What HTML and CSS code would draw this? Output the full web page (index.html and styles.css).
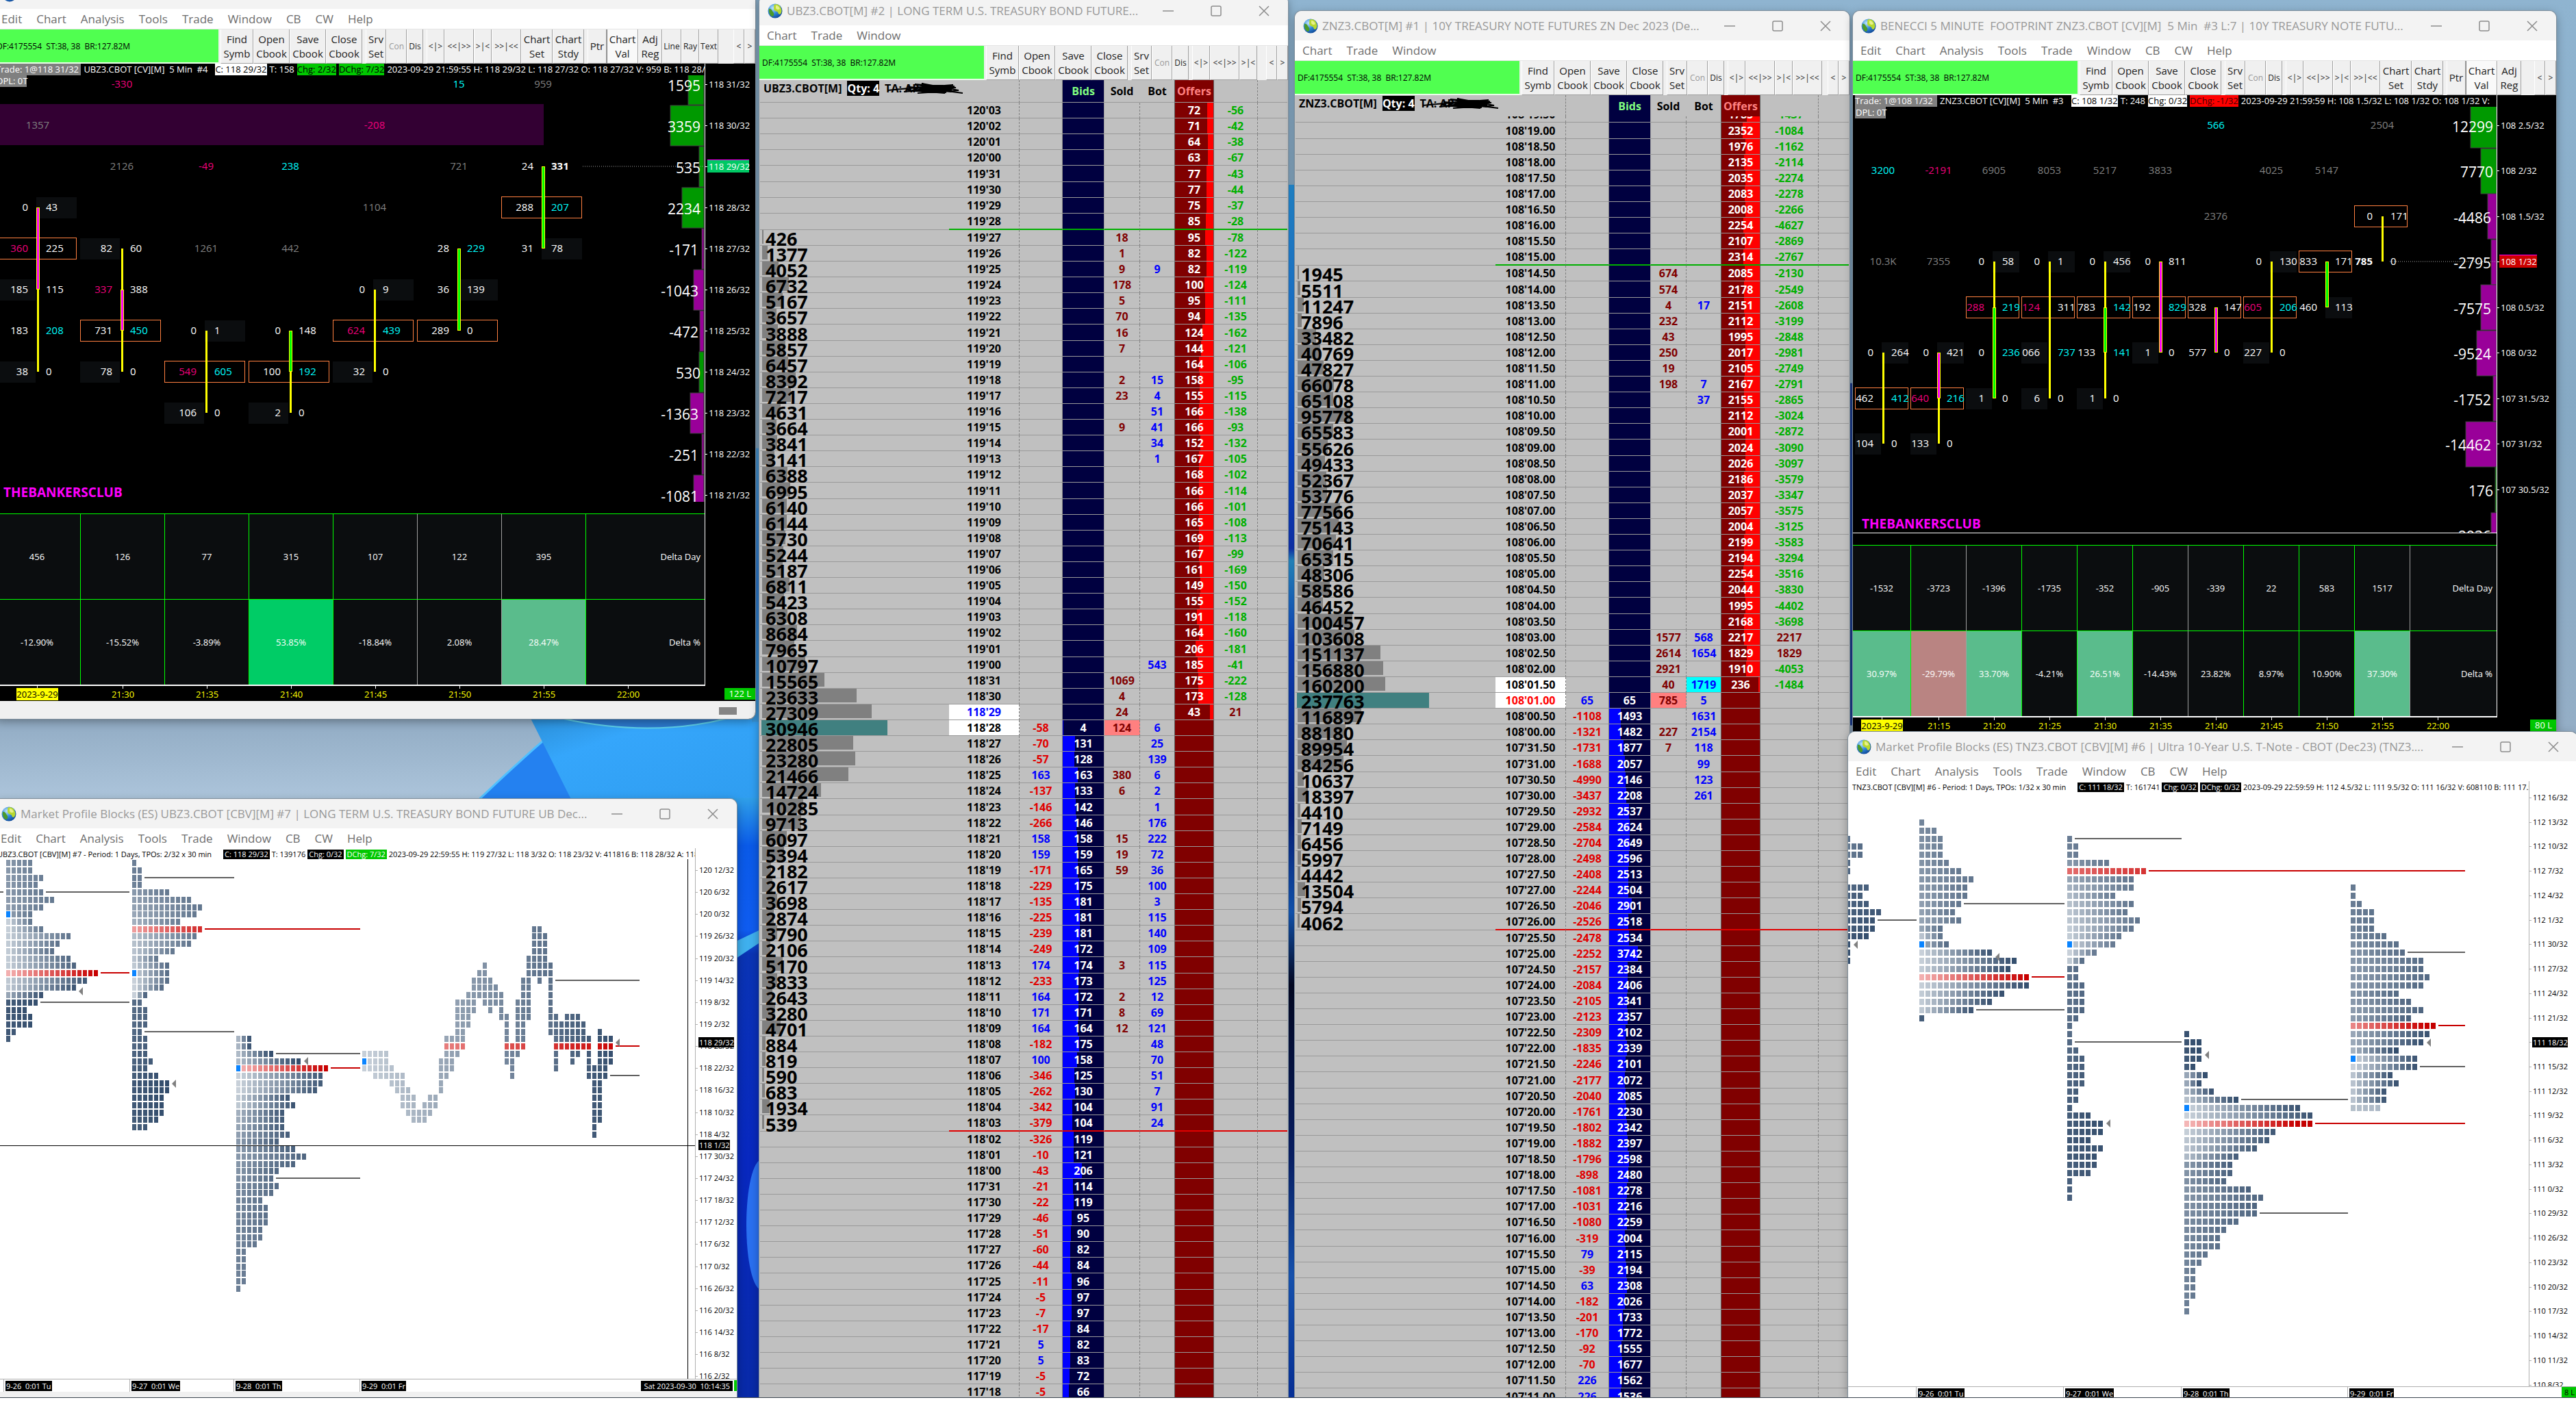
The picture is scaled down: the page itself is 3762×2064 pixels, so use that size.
FILE: index.html
```html
<!DOCTYPE html>
<html lang="en">
<head>
<meta charset="utf-8">
<title>Treasury futures workspace</title>
<link rel="stylesheet" href="styles.css">
</head>
<body>
<main class="desktop">
  <svg class="wallpaper" viewBox="0 0 3762 2042" preserveAspectRatio="none" aria-hidden="true">
    <defs>
      <linearGradient id="sky" x1="0" y1="0" x2="0" y2="1">
        <stop offset="0" stop-color="#8fb4d0"/><stop offset=".3" stop-color="#86a9c4"/>
        <stop offset=".52" stop-color="#94aec6"/><stop offset=".58" stop-color="#b0c8de"/><stop offset="1" stop-color="#a9c4dc"/>
      </linearGradient>
      <linearGradient id="petal" x1="0" y1="0" x2="1" y2="1">
        <stop offset="0" stop-color="#2b8fd8"/><stop offset=".3" stop-color="#35a6fb"/><stop offset="1" stop-color="#2f9df0"/>
      </linearGradient>
      <linearGradient id="deep" x1="0" y1="0" x2="0" y2="1">
        <stop offset="0" stop-color="#2f9fe8"/><stop offset=".08" stop-color="#0a5ae8"/><stop offset=".22" stop-color="#0f5cf0"/>
        <stop offset=".26" stop-color="#0a34b4"/><stop offset=".6" stop-color="#0828c0"/><stop offset="1" stop-color="#082aa8"/>
      </linearGradient>
      <linearGradient id="mid" x1="0" y1="0" x2="0" y2="1">
        <stop offset="0" stop-color="#2596e4"/><stop offset=".12" stop-color="#1f7fe6"/><stop offset=".22" stop-color="#0a4fe0"/>
        <stop offset=".3" stop-color="#1238c0"/><stop offset=".31" stop-color="#2a98d8"/><stop offset=".38" stop-color="#1048d0"/>
        <stop offset=".52" stop-color="#082488"/><stop offset=".6" stop-color="#1560c8"/><stop offset=".66" stop-color="#050a28"/>
        <stop offset=".8" stop-color="#0a2474"/><stop offset=".9" stop-color="#1a60cc"/><stop offset="1" stop-color="#0838b0"/>
      </linearGradient>
      <linearGradient id="edge" x1="0" y1="0" x2="0" y2="1">
        <stop offset="0" stop-color="#4a9cdc"/><stop offset=".5" stop-color="#2f7fd8"/><stop offset="1" stop-color="#3a9ae0"/>
      </linearGradient>
    </defs>
    <rect width="3762" height="2042" fill="url(#sky)"/>
    <path d="M794 1082 Q750 1120 700 1168 H860 Z" fill="#2481f0"/>
    <path d="M794 1082 Q750 1120 700 1168" fill="none" stroke="#4fc0ff" stroke-width="3"/>
    <path d="M775 1050 L834 1168 H1109 V1050 Z" fill="url(#petal)"/>
    <path d="M821 1050 Q949 1078 1062 1050 Z" fill="#2b78cc"/>
    <path d="M821 1050 Q949 1078 1062 1050" fill="none" stroke="#5fd0e8" stroke-width="2"/>
    <rect x="1098" y="655" width="14" height="400" fill="url(#edge)"/>
    <rect x="1070" y="1166" width="42" height="876" fill="url(#deep)"/>
    <path d="M1070 1378 L1112 1358 V1376 L1070 1404 Z" fill="#3fb0ee"/>
    <ellipse cx="1112" cy="1790" rx="22" ry="95" fill="#2a70f0"/>
    <rect x="1876" y="270" width="18" height="1772" fill="url(#mid)"/>
    <rect x="2700" y="560" width="8" height="500" fill="#1c3f96"/>
  </svg>

  <section class="window w-footprint-ub" aria-label="UBZ3 footprint">
    <header class="titlebar"><span class="app-icon"></span><h2></h2><div class="controls"></div></header>
    <nav class="menu" data-items="Edit,Chart,Analysis,Tools,Trade,Window,CB,CW,Help"></nav>
    <div class="toolbar" data-set="full"></div>
    <div class="footprint">
      <div class="fp-body">
        <div class="fp-plot">
          <div class="info dark">
            <span class="tag gray">Trade: 1@118 31/32 </span><span>UBZ3.CBOT [CV][M]  5 Min  #4</span><span class="tag white">C: 118 29/32</span><span>T: 158</span><span class="tag green">Chg: 2/32</span><span class="tag green">DChg: 7/32</span><span>2023-09-29 21:59:55 H: 118 29/32 L: 118 27/32 O: 118 27/32 V: 959 B: 118 28/32</span>
          </div>
          <svg class="plot" id="fp-ub"></svg>
          <table class="delta wide" id="delta-ub"></table>
        </div>
        <svg class="axis" id="fp-ub-axis"></svg>
      </div>
      <div class="times wide" id="times-ub"></div>
      <div class="hscroll"><span class="thumb"></span></div>
    </div>
  </section>

  <section class="window w-dom-ub" aria-label="UBZ3 ladder">
    <header class="titlebar"><span class="app-icon"></span><h2>UBZ3.CBOT[M] #2 | LONG TERM U.S. TREASURY BOND FUTURE...</h2><div class="controls"></div></header>
    <nav class="menu" data-items="Chart,Trade,Window"></nav>
    <div class="toolbar" data-set="short"></div>
    <div class="ladder-box"><table class="ladder ub" id="ladder-ub"></table></div>
  </section>

  <section class="window w-dom-zn" aria-label="ZNZ3 ladder">
    <header class="titlebar"><span class="app-icon"></span><h2>ZNZ3.CBOT[M] #1 | 10Y TREASURY NOTE FUTURES ZN Dec 2023 (De...</h2><div class="controls"></div></header>
    <nav class="menu" data-items="Chart,Trade,Window"></nav>
    <div class="toolbar" data-set="medium"></div>
    <div class="ladder-box"><table class="ladder zn" id="ladder-zn"></table></div>
  </section>

  <section class="window w-footprint-zn" aria-label="ZNZ3 footprint">
    <header class="titlebar"><span class="app-icon"></span><h2>BENECCI 5 MINUTE  FOOTPRINT ZNZ3.CBOT [CV][M]  5 Min  #3 L:7 | 10Y TREASURY NOTE FUTU...</h2><div class="controls"></div></header>
    <nav class="menu" data-items="Edit,Chart,Analysis,Tools,Trade,Window,CB,CW,Help"></nav>
    <div class="toolbar" data-set="study"></div>
    <div class="footprint">
      <div class="fp-body">
        <div class="fp-plot">
          <div class="info dark">
            <span class="tag gray">Trade: 1@108 1/32 </span><span>ZNZ3.CBOT [CV][M]  5 Min  #3</span><span class="tag white">C: 108 1/32</span><span>T: 248</span><span class="tag white">Chg: 0/32</span><span class="tag red">DChg: -1/32</span><span>2023-09-29 21:59:59 H: 108 1.5/32 L: 108 1/32 O: 108 1/32 V:</span>
          </div>
          <svg class="plot" id="fp-zn"></svg>
          <table class="delta narrow" id="delta-zn"></table>
        </div>
        <svg class="axis" id="fp-zn-axis"></svg>
      </div>
      <div class="times narrow" id="times-zn"></div>
    </div>
  </section>

  <section class="window w-profile-ub" aria-label="UBZ3 market profile">
    <header class="titlebar"><span class="app-icon"></span><h2>Market Profile Blocks (ES) UBZ3.CBOT [CBV][M] #7 | LONG TERM U.S. TREASURY BOND FUTURE UB Dec...</h2><div class="controls"></div></header>
    <nav class="menu" data-items="Edit,Chart,Analysis,Tools,Trade,Window,CB,CW,Help"></nav>
    <div class="profile">
      <div class="fp-body">
        <div class="fp-plot">
          <div class="info light"><span>UBZ3.CBOT [CBV][M] #7 - Period: 1 Days, TPOs: 2/32 x 30 min</span><span class="tag black">C: 118 29/32</span><span>T: 139176</span><span class="tag black">Chg: 0/32</span><span class="tag leaf">DChg: 7/32</span><span>2023-09-29 22:59:55 H: 119 27/32 L: 118 3/32 O: 118 23/32 V: 411816 B: 118 28/32 A: 118</span></div>
          <svg class="plot" id="mp-ub"></svg>
        </div>
        <svg class="axis" id="mp-ub-axis"></svg>
      </div>
      <div class="days ub"><i></i><span><b>9-26  0:01 Tu</b></span><span><b>9-27  0:01 We</b></span><span><b>9-28  0:01 Th</b></span><span><b>9-29  0:01 Fr</b></span><b class="clock">Sat 2023-09-30  10:14:35</b><i class="live"></i></div>
    </div>
  </section>

  <section class="window w-profile-tn" aria-label="TNZ3 market profile">
    <header class="titlebar"><span class="app-icon"></span><h2>Market Profile Blocks (ES) TNZ3.CBOT [CBV][M] #6 | Ultra 10-Year U.S. T-Note - CBOT (Dec23) (TNZ3....</h2><div class="controls"></div></header>
    <nav class="menu" data-items="Edit,Chart,Analysis,Tools,Trade,Window,CB,CW,Help"></nav>
    <div class="profile">
      <div class="fp-body">
        <div class="fp-plot">
          <div class="info light"><span>TNZ3.CBOT [CBV][M] #6 - Period: 1 Days, TPOs: 1/32 x 30 min</span><span class="tag black">C: 111 18/32</span><span>T: 161741</span><span class="tag black">Chg: 0/32</span><span class="tag black">DChg: 0/32</span><span>2023-09-29 22:59:59 H: 112 4.5/32 L: 111 9.5/32 O: 111 16/32 V: 608110 B: 111 17.5/32</span></div>
          <svg class="plot" id="mp-tn"></svg>
        </div>
        <svg class="axis" id="mp-tn-axis"></svg>
      </div>
      <div class="days tn"><i></i><span><b>9-26  0:01 Tu</b></span><span><b>9-27  0:01 We</b></span><span><b>9-28  0:01 Th</b></span><span><b>9-29  0:01 Fr</b></span><b class="count">8 L</b></div>
    </div>
  </section>
</main>
<footer class="tray"></footer>
<script src="app.js"></script>
</body>
</html>
```

FILE: styles.css
```css
* { box-sizing: border-box; }

body {
  margin: 0;
  min-height: 100vh;
  display: flex;
  flex-direction: column;
  background: #fff;
  font-family: "Open Sans", "Noto Sans", sans-serif;
}

button {
  font: inherit;
  color: inherit;
  background: none;
  border: 0;
  padding: 0;
}

.desktop {
  flex: 1;
  position: relative;
  overflow: hidden;
  border-bottom: 1px solid #3c4650;
}

.tray { height: 22px; background: #fff; }

.wallpaper { position: absolute; inset: 0; width: 100%; height: 100%; }

/* Windows on the desktop */
.window {
  position: absolute;
  display: flex;
  flex-direction: column;
  overflow: hidden;
  border-radius: 10px 10px 0 0;
  background: #f3f3f3;
  box-shadow: 0 0 0 1px #7f8f9c, 0 4px 14px rgba(0, 0, 0, .35);
}
.w-footprint-ub { left: -9px; top: -30px; width: 1112px; height: 1080px; border-radius: 10px; }
.w-dom-ub { left: 1109px; top: -6px; width: 772px; bottom: 0; }
.w-dom-zn { left: 1891px; top: 16px; width: 810px; bottom: 0; }
.w-footprint-zn { left: 2706px; top: 16px; width: 1027px; height: 1054px; }
.w-profile-ub { left: -10px; top: 1167px; width: 1086px; bottom: 0; }
.w-profile-tn { left: 2699px; top: 1069px; width: 1065px; bottom: 0; }

.titlebar {
  flex: none;
  height: 43px;
  display: flex;
  align-items: center;
  padding-left: 12px;
  background: #f3f3f3;
}
.titlebar h2 {
  flex: 1;
  margin: 0;
  min-width: 0;
  overflow: hidden;
  white-space: pre;
  font-size: 17px;
  font-weight: 400;
  line-height: 24px;
  color: #999;
}
.app-icon { flex: none; width: 22px; height: 22px; margin-right: 6px; }
.app-icon svg { display: block; width: 22px; height: 22px; }
.controls { flex: none; display: flex; }
.controls button { width: 70px; height: 42px; display: grid; place-items: center; }
.controls svg { width: 16px; height: 16px; fill: none; stroke: #8c8c8c; stroke-width: 1.5; }

.menu {
  flex: none;
  height: 29px;
  display: flex;
  align-items: center;
  gap: 21px;
  padding-left: 11px;
  background: #fff;
  font-size: 17px;
  line-height: 24px;
  color: #6e6e6e;
}

.toolbar {
  flex: none;
  height: 51px;
  display: flex;
  align-items: stretch;
  background: #f0f0f0;
  border-top: 1px solid #e4e4e4;
  font-size: 15px;
  line-height: 21px;
  color: #222;
}
.toolbar .feed {
  flex: 0 1 328px;
  margin-right: 3px;
  padding-left: 4px;
  display: flex;
  align-items: center;
  background: #50ff50;
  border-bottom: 2px solid #e8ffe8;
  font-size: 12px;
  white-space: pre;
  color: #000;
}
.toolbar button {
  flex: none;
  text-align: center;
  border-left: 1px solid #fff;
  border-right: 1px solid #a0a0a0;
  border-bottom: 1px solid #a0a0a0;
}
.toolbar .small { font-size: 12px; }
.toolbar .off { color: #999; }
.toolbar .on { background: #f9f9f9; border-left-color: #808080; }
.toolbar .space { flex: 0 0 5px; }
.toolbar .fill { flex: 1; }
.b16 { width: 16px; } .b24 { width: 24px; } .b26 { width: 26px; } .b28 { width: 28px; }
.b30 { width: 30px; } .b35 { width: 35px; } .b43 { width: 43px; } .b46 { width: 46px; }
.b48 { width: 48px; } .b53 { width: 53px; }

/* Price ladder */
.ladder-box { flex: 1; overflow: hidden; background: #c0c0c0; padding: 0 1px; min-height: 0; }
.ladder {
  width: 100%;
  table-layout: fixed;
  border-collapse: separate;
  border-spacing: 0;
  font-size: 16px;
  font-weight: 700;
  line-height: 22px;
  text-align: center;
  color: #000;
}
.ladder th, .ladder td { padding: 0; height: 23px; white-space: nowrap; }
.ladder td { border-bottom: 1px solid #999; }
.ladder .tall td { height: 24px; }
.ladder th { height: 33px; border-bottom: 1px solid #999; }
.ladder.zn th { height: 31px; border-bottom: 0; }
.c-vol { width: 276px; }
.zn .c-vol { width: 292px; }
.c-price { width: 103px; }
.c-d { width: 63px; }
.c-bid { width: 61px; }
.c-sold { width: 52px; }
.c-bot { width: 51px; }
.c-off { width: 57px; }
.c-od { width: 64px; }
.zn .c-od { width: 85px; }
.ladder .vol {
  padding-left: 8px;
  text-align: left;
  font-size: 27px;
  font-weight: 700;
  background: linear-gradient(#808080, #808080) 3px 0 / var(--bar, 0) 20px no-repeat;
}
.ladder .vol.poc { background: linear-gradient(#408080, #408080) 2px 0 / var(--bar) 100% no-repeat; }
.ladder .vol span { display: block; height: 22px; line-height: 26px; }
.ladder .price, .ladder .sold, .ladder .od { border-right: 1px dashed #808080; }
.ladder .bd { color: #e00000; border-right: 1px solid #808080; }
.ladder .up { color: #0000ff; }
.ladder .bid {
  color: #fff;
  border-right: 1px solid #a0a0a0;
  background: linear-gradient(#0000ff, #0000ff) 0 0 / var(--bar, 0) 100% no-repeat, #000040;
}
.ladder .sold { color: #800000; }
.ladder .bot { color: #0000ff; border-right: 1px solid #606060; }
.ladder .off {
  color: #fff;
  border-right: 1px solid #606060;
  background: linear-gradient(#ff0000, #ff0000) 100% 0 / var(--bar, 0) 100% no-repeat, #800000;
}
.ladder .od { color: #00b000; }
.ladder .od.plus { color: #800000; }
.ladder .price.last { background: #fff; }
.ladder .price.blue { color: #0000ff; }
.ladder .price.red { color: #ff0000; }
.ladder .sold.hit { background: #ff8080; }
.ladder .bot.hit { background: #00ffff; }
.ladder .high td:not(.vol) { border-bottom: 2px solid #00b000; }
.ladder .low td:not(.vol) { border-bottom: 2px solid #e00000; }
.ladder th.bid { color: #80ff80; }
.ladder th.sold, .ladder th.bot { color: #000; }
.ladder th.sold { border-right-color: #c0c0c0; }
.ladder th.off { color: #ff8080; }
.ladder .cut td { height: 9px; }
.ladder .cut span { display: flex; align-items: flex-end; justify-content: center; height: 8px; overflow: hidden; }
.account { display: flex; align-items: center; height: 30px; padding: 0 0 8px 5px; gap: 8px; }
.account .qty { background: #000; color: #fff; }
.account .owner { position: relative; }
.account svg { position: absolute; left: 4px; top: 2px; width: 112px; height: 18px; fill: none; stroke: #000; stroke-width: 2; }

/* Chart windows */
.footprint, .profile { flex: 1; min-height: 0; display: flex; flex-direction: column; }
.footprint { background: #000; }
.profile { background: #fff; }
.fp-body { flex: 1; min-height: 0; display: flex; }
.fp-plot { flex: 1; min-width: 0; display: flex; flex-direction: column; }
.footprint .fp-plot { border-right: 1px solid #fff; border-bottom: 2px solid #fff; }
.plot { flex: 1; min-height: 0; width: 100%; display: block; overflow: hidden; }
.axis { flex: none; overflow: hidden; height: 100%; }
.w-footprint-ub .axis { width: 73px; }
.w-footprint-zn .axis { width: 86px; }
.w-profile-ub .axis { width: 61px; border-left: 1px solid #b0b0b0; }
.w-profile-tn .axis { width: 71px; border-left: 1px solid #b0b0b0; }

.info { flex: none; display: flex; gap: 4px; overflow: hidden; white-space: pre; }
.info span { flex: none; }
.info.dark { height: 17px; padding-left: 3px; font-size: 13px; line-height: 17px; color: #fff; }
.info.dark .tag.gray { min-width: 120px; }
.info.dark span:nth-child(2) { min-width: 188px; }
.info.light { height: 16px; padding-top: 2px; gap: 3px; font-size: 11px; line-height: 14px; color: #000; }
.info.light .tag { padding: 0 2px; }
.info.light span:first-child { margin-right: 14px; }
.w-profile-ub .info span:first-child { margin-left: 6px; }
.w-profile-tn .info { padding-left: 6px; }
.tag.gray { background: #808080; }
.tag.white { background: #fff; color: #000; }
.tag.green { background: #00c800; color: #000; }
.tag.red { background: #ff0000; color: #400000; }
.tag.black { background: #000; color: #fff; }
.tag.leaf { background: #00c800; color: #fff; }

.delta {
  flex: none;
  width: 100%;
  margin-top: 17px;
  table-layout: fixed;
  border-collapse: separate;
  border-spacing: 0;
  font-size: 13px;
  line-height: 18px;
  color: #fff;
  text-align: center;
}
.delta td, .delta th {
  height: 125px;
  padding: 0;
  font-weight: 400;
  background: #0b0d0f;
  border-top: 1px solid #00ff00;
  border-right: 1px solid #00ff00;
}
.delta th { text-align: right; padding-right: 6px; border-right: 0; }
.delta .soft { border-right-color: #a0a0a0; }
.delta .buy { background: #5abc8c; }
.delta .strong { background: #00cc66; }
.delta .sell { background: #b98482; }
.delta.wide col { width: 123px; }
.delta.wide col:first-child { width: 127px; }
.delta.narrow col { width: 81px; }
.delta.narrow col:first-child { width: 85px; }
.delta col:last-child { width: auto; }

.times {
  flex: none;
  height: 22px;
  display: flex;
  align-items: center;
  font-size: 13px;
  line-height: 17px;
  color: #ffff00;
}
.times time { flex: none; text-align: center; background: linear-gradient(#fff, #fff) 50% 0 / 1px 4px no-repeat; padding: 4px 0 1px; }
.times.wide time { width: 123px; }
.times.wide time:first-child { width: 127px; }
.times.narrow time { width: 81px; }
.times.narrow time:first-child { width: 85px; }
.times mark { background: #ffff00; color: #000; }
.times output { margin-left: auto; padding: 0 6px 0 7px; background: #00c800; color: #fff; }
.hscroll { flex: none; height: 26px; padding: 8px 27px; background: #f0f0f0; border-top: 1px solid #fff; display: flex; justify-content: flex-end; }
.hscroll .thumb { width: 26px; height: 11px; background: #858585; }

.days { flex: none; display: flex; align-items: center; border-top: 1px solid #b0b0b0; font-size: 11px; line-height: 15px; white-space: pre; }
.days.ub { height: 27px; padding-bottom: 8px; background: linear-gradient(#fff 18px, #f0f0f0 18px); }
.days.tn { height: 16px; }
.days i { flex: none; }
.days span { flex: none; align-self: stretch; border-left: 1px solid #b0b0b0; padding: 2px 0 0 2px; }
.days b { font-weight: 400; background: #000; color: #fff; display: inline-block; padding: 0 1px; }
.days.ub i:first-child { width: 15px; }
.days.ub span { width: 184px; }
.days.ub span:nth-of-type(2) { width: 152px; }
.days.tn i:first-child { width: 99px; }
.days.tn span { width: 215px; }
.days.tn span:nth-of-type(2) { width: 172px; }
.days.tn span:nth-of-type(3) { width: 243px; }
.days .clock { margin-left: auto; padding: 0 4px; }
.days .live { width: 4px; height: 16px; margin-left: 2px; background: #00c800; }
.days .count { margin-left: auto; padding: 0 4px; background: #00c800; color: #000; }

/* Chart drawing */
.plot text, .axis text { font-family: "Open Sans", "Noto Sans", sans-serif; }
.fp-cell { font-size: 15px; fill: #fff; }
.fp-cell.gray { fill: #808080; }
.fp-cell.mag { fill: #f0007c; }
.fp-cell.cyan { fill: #00ffff; }
.fp-cell.bold { font-weight: 700; }
.fp-net { font-size: 21px; fill: #fff; text-anchor: end; }
.fp-club { font-size: 19px; font-weight: 700; fill: #ff00ff; }
.fp-price { font-size: 13px; fill: #fff; }
.fp-tag { font-size: 13px; fill: #fff; }
.mp-price { font-size: 11px; fill: #000; }
.mp-price.inv { fill: #fff; }
.mid { text-anchor: middle; }
.end { text-anchor: end; }
```

FILE: app.js
```js
const $ = (s) => document.getElementById(s);
const all = (s) => document.querySelectorAll(s);

/* Window chrome */
all('.app-icon').forEach((el, i) => {
  el.innerHTML = `<svg viewBox="0 0 22 22"><defs><radialGradient id="g${i}" cx=".35" cy=".3" r=".8"><stop offset="0" stop-color="#bfe6ff"/><stop offset=".5" stop-color="#2f86d8"/><stop offset="1" stop-color="#0b3f8c"/></radialGradient></defs><circle cx="11" cy="11" r="10.5" fill="url(#g${i})"/><path d="M9 2c4-2 9 0 10 4 2 3 2 8-1 10-3 0-2-3-4-4-3-1-5-2-5-5 0-2 1-2 0-5z" fill="#b8d92e"/><path d="M12 3c3 0 5 2 6 5-2 2-5 1-6-1z" fill="#e6f08a"/><path d="M2 8c2-1 4 1 5 3s3 3 2 6-3 2-4 1-4-5-3-10z" fill="#4c9a2a"/></svg>`;
});
all('.controls').forEach((el) => {
  el.innerHTML =
    '<button aria-label="Minimize"><svg viewBox="0 0 16 16"><path d="M0 8h16"/></svg></button>' +
    '<button aria-label="Maximize"><svg viewBox="0 0 16 16"><rect x="1" y="1" width="14" height="14" rx="2"/></svg></button>' +
    '<button aria-label="Close"><svg viewBox="0 0 16 16"><path d="M1 1l14 14M15 1L1 15"/></svg></button>';
});
all('.menu').forEach((el) => {
  el.innerHTML = el.dataset.items.split(',').map((t) => `<button>${t}</button>`).join('');
});

const base = [['Find<br>Symb', 48], ['Open<br>Cbook', 53], ['Save<br>Cbook', 53], ['Close<br>Cbook', 53], 'space',
  ['Srv<br>Set', 30], ['Con', 30, 'small off'], ['Dis', 24, 'small'], 'space',
  ['&lt;|&gt;', 26, 'small'], ['&lt;&lt;|&gt;&gt;', 43, 'small'], ['&gt;|&lt;', 26, 'small']];
const squeeze = [['&gt;&gt;|&lt;&lt;', 43, 'small']];
const study = [['Chart<br>Set', 46], ['Chart<br>Stdy', 46], 'space', ['Ptr', 28], ['Chart<br>Val', 46, 'on'], ['Adj<br>Reg', 35]];
const draw = [['Line', 28, 'small'], ['Ray', 26, 'small'], ['Text', 28, 'small']];
const arrows = ['fill', ['&lt;', 16, 'small'], ['&gt;', 16, 'small']];
const sets = {
  short: [...base, ...arrows],
  medium: [...base, ...squeeze, ...arrows],
  study: [...base, ...squeeze, ...study, ...arrows],
  full: [...base, ...squeeze, ...study, ...draw, ...arrows]
};
all('.toolbar').forEach((el) => {
  el.innerHTML = '<span class="feed">DF:4175554  ST:38, 38  BR:127.82M</span>' + sets[el.dataset.set].map((b) =>
    typeof b === 'string' ? `<span class="${b}"></span>` : `<button class="b${b[1]} ${b[2] || ''}">${b[0]}</button>`).join('');
});

/* Price ladders */
function ladder(id, o) {
  const top = Math.max(...o.vol);
  const rows = [];
  for (let i = 0; i < 82; i++) {
    const v = o.vol[i - o.volAt], b = o.bid[i - o.split], bd = o.bd[i - o.split];
    const f = o.off[i], od = o.od[i], s = o.sold[i], t = o.bot[i];
    const cut = o.cut && i === 0;
    const w = (x) => (x === undefined ? '' : cut ? `<span>${x}</span>` : x);
    const cls = [cut ? 'cut' : '', i % 10 === o.tall ? 'tall' : '', i === o.high ? 'high' : '', i === o.low ? 'low' : ''].join(' ').trim();
    rows.push(`<tr class="${cls}">` +
      (v ? `<td class="vol${v === top ? ' poc' : ''}" style="--bar:${Math.round(v / top * o.volPx) + (v === top ? 3 : 0)}px"><span>${v}</span></td>` : '<td class="vol"></td>') +
      `<td class="price ${o.mark[i] || ''}">${w(o.price(i))}</td>` +
      `<td class="bd${bd > 0 ? ' up' : ''}">${w(bd)}</td>` +
      `<td class="bid"${b ? ` style="--bar:${Math.round(b * 61 / o.full)}px"` : ''}>${w(b)}</td>` +
      `<td class="sold${i === o.soldHit ? ' hit' : ''}">${w(s)}</td>` +
      `<td class="bot${i === o.botHit ? ' hit' : ''}">${w(t)}</td>` +
      `<td class="off"${f ? ` style="--bar:${Math.round(f * 57 / o.full)}px"` : ''}>${w(f)}</td>` +
      `<td class="od${od > 0 ? ' plus' : ''}">${w(od)}</td><td></td></tr>`);
  }
  $(id).innerHTML = '<colgroup><col class="c-vol"><col class="c-price"><col class="c-d"><col class="c-bid"><col class="c-sold"><col class="c-bot"><col class="c-off"><col class="c-od"><col></colgroup>' +
    `<thead><tr><th colspan="2" class="price"><div class="account"><span>${o.symbol}</span><span class="qty">Qty: 4</span><span class="owner">${o.owner}<svg viewBox="0 0 112 18"><path d="M0 12L60 6 20 10 96 4 24 14 100 8 40 3 92 14 30 7 88 11 44 16 104 12 50 2 84 16 36 12 98 6 M56 9L110 16M60 5H82M50 11H94M46 8H90M52 13H88M58 6L86 15"/></svg></span></div></th>` +
    '<th class="bd"></th><th class="bid">Bids</th><th class="sold">Sold</th><th class="bot">Bot</th><th class="off">Offers</th><th class="od"></th><th></th></tr></thead>' +
    `<tbody>${rows.join('')}</tbody>`;
}
const pad = (n) => String(n).padStart(2, '0');

ladder('ladder-ub', {
  symbol: 'UBZ3.CBOT[M]', owner: 'TA: AP', tall: 4, high: 7, low: 64, split: 39, volAt: 8, volPx: 181, full: 450,
  price: (i) => { const t = 120 * 32 + 3 - i; return `${Math.floor(t / 32)}'${pad(t % 32)}`; },
  mark: { 38: 'last blue', 39: 'last' }, soldHit: 39,
  vol: [426,1377,4052,6732,5167,3657,3888,5857,6457,8392,7217,4631,3664,3841,3141,6388,6995,6140,6144,5730,5244,5187,6811,5423,6308,8684,7965,10797,15565,23633,27309,30946,22805,23280,21466,14724,10285,9713,6097,5394,2182,2617,3698,2874,3790,2106,5170,3833,2643,3280,4701,884,819,590,683,1934,539],
  off: [72,71,64,63,77,77,75,85,95,82,82,100,95,94,124,144,164,158,155,166,166,152,167,168,166,166,165,169,167,161,149,155,191,164,206,185,175,173,43],
  od: [-56,-42,-38,-67,-43,-44,-37,-28,-78,-122,-119,-124,-111,-135,-162,-121,-106,-95,-115,-138,-93,-132,-105,-102,-114,-101,-108,-113,-99,-169,-150,-152,-118,-160,-181,-41,-222,-128,21],
  bid: [4,131,128,163,133,142,146,158,159,165,175,181,181,181,172,174,173,172,171,164,175,158,125,130,104,104,119,121,206,114,119,95,90,82,84,96,97,97,84,82,83,72,66],
  bd: [-58,-70,-57,163,-137,-146,-266,158,159,-171,-229,-135,-225,-239,-249,174,-233,164,171,164,-182,100,-346,-262,-342,-379,-326,-10,-43,-21,-22,-46,-51,-60,-44,-11,-5,-7,-17,5,5,-5,-5],
  sold: {8:18,9:1,10:9,11:178,12:5,13:70,14:16,15:7,17:2,18:23,20:9,36:1069,37:4,38:24,39:124,42:380,43:6,46:15,47:19,48:59,54:3,56:2,57:8,58:12},
  bot: {10:9,17:15,18:4,19:51,20:41,21:34,22:1,35:543,39:6,40:25,41:139,42:6,43:2,44:1,45:176,46:222,47:72,48:36,49:100,50:3,51:115,52:140,53:109,54:115,55:125,56:12,57:69,58:121,59:48,60:70,61:51,62:7,63:91,64:24}
});

ladder('ladder-zn', {
  symbol: 'ZNZ3.CBOT[M]', owner: 'TA: AP', cut: true, tall: 1, high: 9, low: 51, split: 37, volAt: 10, volPx: 190, full: 5400,
  price: (i) => { const t = 108 * 32 + 19.5 - i / 2; const q = Math.floor(t / 32); const r = t - q * 32; return `${q}'${r.toFixed(2).padStart(5, '0')}`; },
  mark: { 36: 'last', 37: 'last red' }, soldHit: 37, botHit: 36,
  vol: [1945,5511,11247,7896,33482,40769,47827,66078,65108,95778,65583,55626,49433,52367,53776,77566,75143,70641,65315,48306,58586,46452,100457,103608,151137,156880,160200,237763,116897,88180,89954,84256,10637,18397,4410,7149,6456,5997,4442,13504,5794,4062],
  off: [1785,2352,1976,2135,2035,2083,2008,2254,2107,2314,2085,2178,2151,2112,1995,2017,2105,2167,2155,2112,2001,2024,2026,2186,2037,2057,2004,2199,2194,2254,2044,1995,2168,2217,1829,1910,236],
  od: [-1437,-1084,-1162,-2114,-2274,-2278,-2266,-4627,-2869,-2767,-2130,-2549,-2608,-3199,-2848,-2981,-2749,-2791,-2865,-3024,-2872,-3090,-3097,-3579,-3347,-3575,-3125,-3583,-3294,-3516,-3830,-4402,-3698,2217,1829,-4053,-1484],
  bid: [65,1493,1482,1877,2057,2146,2208,2537,2624,2649,2596,2513,2504,2901,2518,2534,3742,2384,2406,2341,2357,2102,2339,2101,2072,2085,2230,2342,2397,2598,2480,2278,2216,2259,2004,2115,2194,2308,2026,1733,1772,1555,1677,1562,1536],
  bd: [65,-1108,-1321,-1731,-1688,-4990,-3437,-2932,-2584,-2704,-2498,-2408,-2244,-2046,-2526,-2478,-2252,-2157,-2084,-2105,-2123,-2309,-1835,-2246,-2177,-2040,-1761,-1802,-1882,-1796,-898,-1081,-1031,-1080,-319,79,-39,63,-182,-201,-170,-92,-70,226,226],
  sold: {10:674,11:574,12:4,13:232,14:43,15:250,16:19,17:198,33:1577,34:2614,35:2921,36:40,37:785,39:227,40:7},
  bot: {12:17,17:7,18:37,33:568,34:1654,36:1719,37:5,38:1631,39:2154,40:118,41:99,42:123,43:261}
});

/* SVG helpers */
const rect = (x, y, w, h, fill, extra = '') => `<rect x="${x}" y="${y}" width="${w}" height="${h}" fill="${fill}" ${extra}/>`;
const text = (x, y, cls, s) => `<text x="${x}" y="${y}" dy=".36em" class="${cls}">${s}</text>`;
const paint = (id, x, y, body) => { $(id).innerHTML = `<g transform="translate(${-x} ${-y})">${body}</g>`; };

/* Footprint charts. Cell: [column, row, sell, buy, flags]
   o boxed, L/R dim side, m magenta sell, c cyan buy, b/B bold side */
function footprint(id, o) {
  const X = (c) => o.cx + c * o.dx, Y = (k) => Math.round(o.cy + k * o.dy);
  let s = '';
  if (o.zone) s += rect(...o.zone, '#330033');
  o.net.forEach((n, k) => {
    const y = Math.round(o.cy + (k - .5) * o.dy) + 1;
    s += rect(o.right - n[1], y, n[1], Math.round(o.dy) - 1, n[0] > 0 ? '#009900' : '#990099', 'stroke="#404040"');
  });
  s += `<path d="M${o.dots} ${Y(o.lastRow)}H${o.right}" stroke="#a0a0a0" stroke-dasharray="1 2"/>`;
  o.cells.forEach(([c, k, a, b, f = '']) => {
    const x = X(c), y = Y(k);
    if (f.includes('L')) s += rect(x - o.half, y - 15, o.half - 3, 31, '#0b0d0f');
    if (f.includes('R')) s += rect(x - 2, y - 15, o.half - 2, 31, '#0b0d0f');
    if (f.includes('o')) s += rect(x - o.half + .5, y - 15.5, o.half * 2 - 5, 31, 'none', 'stroke="#ff8040"');
  });
  o.bars.forEach(([c, a, b, kind]) => {
    const x = X(c);
    if (kind === 'y') s += rect(x - 1, Y(a), 3, Y(b) - Y(a), '#ffff00');
    else s += rect(x - 2, Y(a), 5, Y(b) - Y(a), '#ffff00') + rect(x - 1, Y(a) + 1, 3, Y(b) - Y(a) - 2, kind === 'g' ? '#00ff00' : '#ff00ff');
  });
  o.cells.forEach(([c, k, a, b, f = '']) => {
    s += text(X(c) - 14, Y(k), `fp-cell end${f.includes('m') ? ' mag' : ''}${f.includes('b') ? ' bold' : ''}`, a);
    s += text(X(c) + 12, Y(k), `fp-cell${f.includes('c') ? ' cyan' : ''}${f.includes('B') ? ' bold' : ''}`, b);
  });
  o.notes.forEach(([c, k, t, cls = 'gray']) => { s += text(X(c), Y(k), `fp-cell mid ${cls}`, t); });
  o.net.forEach((n, k) => { s += text(o.right - (n[0] > 0 ? 5 : 8), Y(k) + 2, 'fp-net', n[0]); });
  s += rect(o.x + 3, o.y, 45, 17, '#808080') + text(o.dpl, o.y + 8, 'fp-tag', 'DPL: 0T');
  s += text(o.club[0], o.club[1], 'fp-club', 'THEBANKERSCLUB');
  s += rect(o.x, o.bottom - 2, 2000, 2, '#ffffff');
  paint(id, o.x, o.y, s);

  let a = '';
  o.labels.forEach((t, k) => {
    if (k === o.lastRow) a += rect(o.ax + 3, Y(k) - 9, o.tagW, 18, o.tagFill) + rect(o.ax + 3, Y(k) - 10, o.tagW, 1, '#ff00ff');
    a += rect(o.ax, Y(k), 3, 1, '#ffffff') + text(o.ax + 5, Y(k), 'fp-price', t);
  });
  paint(id + '-axis', o.ax, o.y - 17, a);
}

footprint('fp-ub', {
  x: -9, y: 110, bottom: 735, cx: 55, dx: 123, cy: 122.5, dy: 60, half: 61, right: 1028, ax: 1030,
  zone: [-9, 152, 803, 60], dots: 851, lastRow: 2, dpl: -5, club: [5, 719], tagW: 61, tagFill: '#00c864',
  net: [[1595,23],[3359,49],[535,7],[2234,32],[-171,3],[-1043,15],[-472,6],[530,7],[-1363,20],[-251,3],[-1081,15]],
  labels: [31,30,29,28,27,26,25,24,23,22,21].map((n) => `118 ${n}/32`),
  cells: [
    [0,3,0,43,'R'],[0,4,360,225,'om'],[0,5,185,115,'L'],[0,6,183,208,'c'],[0,7,38,0,'L'],
    [1,4,82,60,'L'],[1,5,337,388,'m'],[1,6,731,450,'oc'],[1,7,78,0,'L'],
    [2,6,0,1,'R'],[2,7,549,605,'omc'],[2,8,106,0,'L'],
    [3,6,0,148],[3,7,100,192,'oc'],[3,8,2,0,'L'],
    [4,5,0,9,'R'],[4,6,624,439,'omc'],[4,7,32,0,'L'],
    [5,4,28,229,'c'],[5,5,36,139,'R'],[5,6,289,0,'o'],
    [6,2,24,331,'B'],[6,3,288,207,'oc'],[6,4,31,78,'R']
  ],
  bars: [[0,3,7,'y'],[0,3,5,'m'],[1,4,7,'y'],[1,5,6,'m'],[2,6,8,'y'],[3,6,8,'y'],[3,6,7,'g'],[4,5,7,'y'],[5,4,6,'g'],[6,2,4,'g']],
  notes: [[0,1,1357],[1,0,-330,'mag'],[1,2,2126],[2,2,-49,'mag'],[2,4,1261],[3,2,238,'cyan'],[3,4,442],[4,1,-208,'mag'],[4,3,1104],[5,0,15,'cyan'],[5,2,721],[6,0,959]]
});

footprint('fp-zn', {
  x: 2706, y: 156, bottom: 780, cx: 2750, dx: 81, cy: 182.5, dy: 66.5, half: 41, right: 3646, ax: 3647,
  dots: 3490, lastRow: 3, dpl: 2710, club: [2719, 765], tagW: 55, tagFill: '#cc0000',
  net: [[12299,38],[7770,23],[-4486,13],[-2795,8],[-7575,23],[-9524,29],[-1752,5],[-14462,45],[176,2],[-2936,8]],
  labels: ['108 2.5/32','108 2/32','108 1.5/32','108 1/32','108 0.5/32','108 0/32','107 31.5/32','107 31/32','107 30.5/32'],
  cells: [
    [0,5,0,264,'R'],[0,6,462,412,'oc'],[0,7,104,0,'L'],
    [1,5,0,421,'R'],[1,6,640,216,'omc'],[1,7,133,0,'L'],
    [2,3,0,58,'R'],[2,4,288,219,'omc'],[2,5,0,236,'c'],[2,6,1,0,'L'],
    [3,3,0,1,'R'],[3,4,124,311,'om'],[3,5,'066',737,'Lc'],[3,6,6,0,'L'],
    [4,3,0,456,'R'],[4,4,783,142,'oc'],[4,5,133,141,'c'],[4,6,1,0,'L'],
    [5,3,0,811],[5,4,192,829,'oc'],[5,5,1,0,'L'],
    [6,4,328,147,'o'],[6,5,577,0],
    [7,3,0,130,'R'],[7,4,605,206,'omc'],[7,5,227,0,'L'],
    [8,3,833,171,'o'],[8,4,460,113,'R'],
    [9,2,0,171,'o'],[9,3,785,0,'b']
  ],
  bars: [[0,5,7,'y'],[1,5,7,'y'],[1,5,6,'m'],[2,3,6,'y'],[2,4,6,'g'],[3,3,6,'y'],[4,3,6,'y'],[4,4,5,'g'],[5,3,5,'m'],[6,4,5,'m'],[7,3,5,'y'],[8,3,4,'g'],[9,2,3,'y']],
  notes: [[0,1,3200,'cyan'],[0,3,'10.3K'],[1,1,-2191,'mag'],[1,3,7355],[2,1,6905],[3,1,8053],[4,1,5217],[5,1,3833],[6,0,566,'cyan'],[6,2,2376],[7,1,4025],[8,1,5147],[9,0,2504]]
});

/* Delta tables and time scales */
function delta(id, day, pct, soft, fills) {
  const cell = (v, i, c = '') => `<td class="${soft.includes(i) ? 'soft ' : ''}${c}">${v}</td>`;
  $(id).innerHTML = `<colgroup>${'<col>'.repeat(day.length + 1)}</colgroup><tbody>` +
    `<tr>${day.map((v, i) => cell(v, i)).join('')}<th scope="row">Delta Day</th></tr>` +
    `<tr>${pct.map((v, i) => cell(v + '%', i, fills[i])).join('')}<th scope="row">Delta %</th></tr></tbody>`;
}
delta('delta-ub', [456,126,77,315,107,122,395], ['-12.90','-15.52','-3.89','53.85','-18.84','2.08','28.47'], [4, 5], { 3: 'strong', 6: 'buy' });
delta('delta-zn', [-1532,-3723,-1396,-1735,-352,-905,-339,22,583,1517],
  ['30.97','-29.79','33.70','-4.21','26.51','-14.43','23.82','8.97','10.90','37.30'], [1, 5, 9], { 0: 'buy', 1: 'sell', 2: 'buy', 4: 'buy', 9: 'buy' });
const times = (id, list, n) => {
  $(id).innerHTML = `<time><mark>2023-9-29</mark></time>${list.map((t) => `<time>${t}</time>`).join('')}<output>${n} L</output>`;
};
times('times-ub', ['21:30','21:35','21:40','21:45','21:50','21:55','22:00'], 122);
times('times-zn', ['21:15','21:20','21:25','21:30','21:35','21:40','21:45','21:50','21:55','22:00'], 80);

/* Market profiles. Row: [blocks, first tone, last tone]; tones run 0 (light) to 100 (dark) */
const mix = (a, b, t) => `rgb(${a.map((v, i) => Math.round(v + (b[i] - v) * t)).join()})`;
const slate = (t) => mix([206, 214, 222], [48, 74, 106], t / 100);
const rouge = (t) => mix([246, 190, 190], [200, 0, 0], t / 100);

function profile(id, o) {
  const Y = (r) => Math.round(o.cy + r * o.dy);
  const block = (x, r, fill) => rect(x, Y(r) - 4, o.bw, o.bh, fill);
  let s = '';
  o.days.forEach((d) => {
    let r = d.from;
    d.rows.forEach(([n, a, b]) => {
      for (let j = 0; j < n; j++) {
        const t = n > 1 ? a + (b - a) * j / (n - 1) : a;
        s += block(d.x + j * o.bx, r, d.open === r && j === 0 ? '#0a84ff' : d.poc === r ? rouge(t) : slate(t));
      }
      r++;
    });
  });
  (o.split || []).forEach(([a, b], j, list) => {
    for (let r = a; r <= b; r++) {
      const t = 5 + 92 * j / list.length;
      s += block(o.splitX + j * o.bx, r, j === 0 && r === 26 ? '#0a84ff' : r === 24 ? rouge(t) : slate(t));
    }
  });
  o.lines.forEach(([x1, x2, r, red]) => { s += rect(x1, Y(r) - 1, x2 - x1, 2, red ? '#c80000' : '#606060'); });
  o.marks.forEach(([x, y]) => { s += `<path d="M${x} ${y}l6-6v12z" fill="#808080"/>`; });
  s += o.extra || '';
  paint(id, o.x, o.y, s);

  let a = '';
  o.labels.forEach(([r, t]) => { a += rect(o.ax, Y(r), 3, 1, '#b0b0b0') + text(o.ax + 5, Y(r), 'mp-price', t); });
  o.tags.forEach(([y, w, t]) => { a += rect(o.ax + 4, y - 8, w, 15, '#000000') + text(o.ax + 5, y, 'mp-price inv', t); });
  paint(id + '-axis', o.ax, o.y - 16, a);
}
const scale = (top, unit, step, n) => Array.from({ length: n }, (_, i) => {
  const p = top - i * step * unit;
  return [i * step, `${Math.floor(p / 32)} ${p % 32}/32`];
});

profile('mp-ub', {
  x: -10, y: 1255, cy: 1271, dy: 10.715, bx: 8, bw: 6, bh: 9, ax: 1015,
  days: [
    { x: 9, from: -1, open: 6, poc: 14, rows: [[5,45,60],[5,45,60],[7,45,62],[6,45,62],[7,45,65],[9,42,66],[7,42,64],[5,40,66],[5,5,66],[7,5,66],[12,8,68],[10,8,70],[9,8,72],[12,8,76],[13,8,80],[17,8,100],[15,10,88],[13,12,90],[7,35,92],[6,88,96],[4,90,96],[5,90,96],[5,90,96],[2,90,90],[1,88,88]] },
    { x: 193, from: -1, open: 14, poc: 8, rows: [[1,62,62],[2,62,64],[2,62,64],[2,60,64],[7,44,66],[11,40,66],[13,38,68],[12,34,66],[9,28,62],[13,18,76],[12,18,66],[11,16,68],[8,14,66],[5,14,66],[7,10,74],[7,8,72],[7,4,72],[6,4,74],[3,4,78],[2,76,78],[3,76,80],[3,76,80],[3,78,82],[2,78,82],[3,80,84],[3,80,84],[3,82,86],[4,82,88],[3,84,88],[5,86,94],[7,90,98],[7,90,98],[6,90,98],[6,90,96],[6,90,96],[5,88,94],[3,86,90]] },
    { x: 345, from: 23, open: 27, poc: 27, rows: [[3,24,90],[3,24,90],[7,20,96],[12,20,98],[17,5,100],[16,4,88],[16,4,86],[15,4,88],[10,10,90],[11,10,92],[9,28,88],[9,30,86],[9,36,86],[10,40,84],[8,44,82],[11,44,82],[13,44,80],[11,46,80],[8,48,78],[7,50,74],[8,52,74],[7,54,72],[5,56,70],[6,58,72],[6,58,72],[6,58,70],[5,58,70],[5,58,68],[4,58,68],[2,60,64],[2,60,64],[2,60,64],[2,60,64],[2,60,64],[1,62,62]] }
  ],
  splitX: 529,
  split: [[25,27],[25,27],[25,28],[25,28],[25,28],[27,29],[28,30],[28,32],[30,33],[31,34],[33,34],[32,34],[31,33],[31,32],[26,30],[23,28],[23,27],[18,25],[18,24],[17,21],[15,19],[14,17],[13,18],[15,19],[16,18],[17,20],[20,26],[24,28],[18,25],[15,24],[12,20],[8,14],[8,15],[9,14],[13,22],[20,27],[21,24],[20,24],[20,26],[20,25],[21,24],[23,28],[27,36],[22,34],[23,28],[23,26]],
  lines: [[-10,5,3],[67,189,3],[147,189,14,1],[59,189,18],[211,342,1],[299,526,8,1],[211,342,22],[403,526,25],[483,526,27,1],[403,526,42],[811,934,15],[899,934,24,1],[891,934,28]],
  marks: [[115,1448],[251,1583],[444,1550],[899,1523]],
  extra: rect(-10, 1673, 1030, 1, '#000000') + rect(1004, 1255, 1, 760, '#000000'),
  labels: scale(120 * 32 + 12, 2, 3, 24),
  tags: [[1523, 52, '118 29/32'], [1673, 46, '118 1/32']]
});

profile('mp-tn', {
  x: 2699, y: 1157, cy: 1165, dy: 11.91, bx: 9, bw: 7, bh: 9, ax: 3693,
  days: [
    { x: 2695, from: 5, rows: [[1,70,70],[3,66,74],[3,66,74],[1,76,76],[1,78,78],[0,0,0],[4,80,84],[3,82,86],[4,82,88],[6,84,90],[5,86,92],[5,88,94],[4,90,96],[1,94,94],[1,94,94],[1,94,94]] },
    { x: 2803, from: 3, open: 18, poc: 22, rows: [[1,58,58],[3,54,60],[4,52,60],[4,50,60],[4,50,62],[5,48,64],[7,46,66],[9,46,68],[8,44,68],[8,42,68],[7,40,68],[6,38,68],[7,36,68],[4,36,70],[4,14,68],[5,30,74],[12,4,90],[16,6,96],[15,8,96],[18,8,100],[18,6,96],[14,8,94],[12,8,92],[9,10,90],[1,86,86]] },
    { x: 3019, from: 5, open: 18, poc: 9, rows: [[1,64,64],[2,62,64],[2,60,64],[7,46,66],[13,44,72],[11,36,68],[11,28,66],[8,20,64],[11,16,68],[10,12,68],[12,12,68],[11,8,68],[9,8,66],[8,4,64],[5,4,64],[3,10,72],[2,70,74],[2,70,74],[3,72,78],[3,72,78],[3,72,78],[3,74,80],[2,74,78],[1,76,76],[1,76,76],[1,78,78],[2,78,82],[3,78,84],[3,80,84],[3,80,86],[3,82,86],[2,82,86],[2,84,86],[1,86,86],[4,86,94],[6,88,96],[6,88,96],[4,90,94],[6,88,94],[5,88,94],[5,86,92],[4,86,90],[1,84,84],[1,84,84],[1,84,84]] },
    { x: 3190, from: 29, open: 38, poc: 40, rows: [[1,94,94],[3,92,98],[3,92,98],[3,90,96],[2,88,96],[4,34,96],[3,34,94],[5,24,92],[9,16,96],[19,4,92],[21,4,92],[21,4,112],[15,6,88],[14,12,86],[12,14,86],[9,20,84],[8,46,84],[8,48,82],[7,50,80],[11,48,82],[13,48,80],[12,50,80],[12,52,78],[9,54,76],[7,56,74],[6,56,72],[6,56,72],[4,58,70],[3,58,68],[2,60,66],[2,60,66],[2,60,66],[2,60,66],[1,62,62],[1,62,62]] },
    { x: 3433, from: 11, open: 32, poc: 28, rows: [[1,66,66],[1,66,66],[2,64,68],[4,62,70],[4,62,70],[4,60,72],[6,56,72],[8,50,72],[9,46,74],[12,44,74],[12,44,76],[13,44,76],[12,44,76],[8,46,76],[10,44,78],[12,42,80],[10,42,82],[14,30,108],[13,34,92],[12,32,94],[8,26,98],[11,4,90],[11,4,92],[7,14,92],[8,14,92],[6,14,90],[6,14,88],[5,16,20]] }
  ],
  lines: [[2742,2799,15],[2868,3015,13],[2967,3015,22,1],[2886,3015,26],[3030,3186,5],[3138,3600,9,1],[3030,3186,30],[3273,3429,37],[3381,3600,40,1],[3300,3429,51],[3516,3600,19],[3561,3600,28,1],[3534,3600,33]],
  marks: [[2707,1380],[2914,1398],[3076,1641],[3220,1541],[3544,1523]],
  labels: scale(112 * 32 + 16, 1, 3, 25),
  tags: [[1523, 52, '111 18/32']]
});
```
